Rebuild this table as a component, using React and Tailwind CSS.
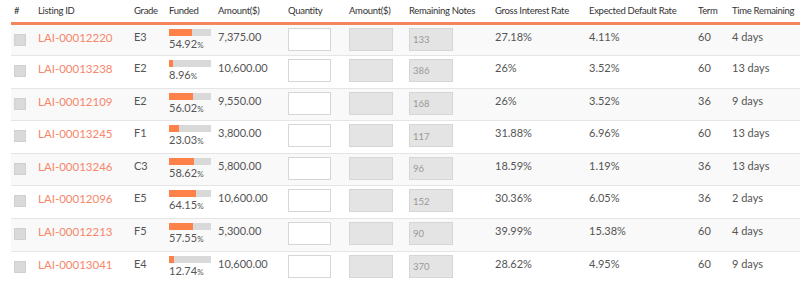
const rows = [
  { id: 'LAI-00012220', grade: 'E3', funded: 54.92, amount: '7,375.00', notes: 133, gross: '27.18%', def: '4.11%', term: 60, time: '4 days' },
  { id: 'LAI-00013238', grade: 'E2', funded: 8.96, amount: '10,600.00', notes: 386, gross: '26%', def: '3.52%', term: 60, time: '13 days' },
  { id: 'LAI-00012109', grade: 'E2', funded: 56.02, amount: '9,550.00', notes: 168, gross: '26%', def: '3.52%', term: 36, time: '9 days' },
  { id: 'LAI-00013245', grade: 'F1', funded: 23.03, amount: '3,800.00', notes: 117, gross: '31.88%', def: '6.96%', term: 60, time: '13 days' },
  { id: 'LAI-00013246', grade: 'C3', funded: 58.62, amount: '5,800.00', notes: 96, gross: '18.59%', def: '1.19%', term: 36, time: '13 days' },
  { id: 'LAI-00012096', grade: 'E5', funded: 64.15, amount: '10,600.00', notes: 152, gross: '30.36%', def: '6.05%', term: 36, time: '2 days' },
  { id: 'LAI-00012213', grade: 'F5', funded: 57.55, amount: '5,300.00', notes: 90, gross: '39.99%', def: '15.38%', term: 60, time: '4 days' },
  { id: 'LAI-00013041', grade: 'E4', funded: 12.74, amount: '10,600.00', notes: 370, gross: '28.62%', def: '4.95%', term: 60, time: '9 days' },
];

const headers = [
  ['#', 'w-[24px]'],
  ['Listing ID', 'w-[96px]'],
  ['Grade', 'w-[35px]'],
  ['Funded', 'w-[49px]'],
  ['Amount($)', 'w-[70px]'],
  ['Quantity', 'w-[61px]'],
  ['Amount($)', 'w-[60px]'],
  ['Remaining Notes', 'w-[86px]'],
  ['Gross Interest Rate', 'w-[94px]'],
  ['Expected Default Rate', 'w-[109px]'],
  ['Term', 'w-[34px]'],
  ['Time Remaining', 'w-[71px]'],
];

function FundedBar({ value }) {
  return (
    <div className="flex flex-col">
      <div className="h-[7px] w-[42px] bg-[#d9d9d9] mt-[4px]">
        <div className="h-full bg-[#fd8149]" style={{ width: `${value}%` }} />
      </div>
      <span className="text-[11px] leading-[13px] mt-[1px]">
        {value}<span className="text-[8px]">%</span>
      </span>
    </div>
  );
}

export default function App() {
  return (
    <div className="w-[800px] h-[283px] overflow-hidden bg-white pl-[11px] text-[#555]" style={{ fontFamily: 'Lato, "Open Sans", sans-serif' }}>
      <table className="table-fixed border-collapse w-[789px]">
        <thead>
          <tr className="border-b-[3px] border-[#f5855a]">
            {headers.map(([label, w], i) => (
              <th key={i} className={`${w} h-[23px] pl-[3px] pt-[1px] text-left font-normal text-[9.5px] tracking-[-0.3px] text-[#333] align-middle whitespace-nowrap`}>
                {label}
              </th>
            ))}
          </tr>
        </thead>
        <tbody>
          {rows.map((r, i) => (
            <tr key={r.id} className={`h-[32.6px] border-b border-[#e5e5e5] ${i % 2 === 0 ? 'bg-[#f9f9f9]' : 'bg-white'}`}>
              <td className="pl-[3px] align-top pt-[9px]">
                <div className="w-[12px] h-[12px] bg-[#dadada] border border-[#d0d0d0]" />
              </td>
              <td className="pl-[3px] align-top pt-[4px] text-[11.5px] text-[#f6876b] whitespace-nowrap">{r.id}</td>
              <td className="pl-[3px] align-top pt-[4px] text-[11px]">{r.grade}</td>
              <td className="pl-[3px] align-top">
                <FundedBar value={r.funded} />
              </td>
              <td className="pl-[3px] align-top pt-[4px] text-[11px] whitespace-nowrap">{r.amount}</td>
              <td className="pl-[3px] align-top pt-[3px]">
                <div className="w-[43px] h-[23px] bg-white border border-[#d6d6d6]" />
              </td>
              <td className="pl-[3px] align-top pt-[3px]">
                <div className="w-[44px] h-[23px] bg-[#e4e4e4] border border-[#d6d6d6]" />
              </td>
              <td className="pl-[3px] align-top pt-[3px]">
                <div className="w-[44px] h-[23px] bg-[#e4e4e4] border border-[#d6d6d6] text-[9.5px] text-[#999] pl-[3px] flex items-center pt-[2px]">
                  {r.notes}
                </div>
              </td>
              <td className="pl-[3px] align-top pt-[4px] text-[11px]">{r.gross}</td>
              <td className="pl-[3px] align-top pt-[4px] text-[11px]">{r.def}</td>
              <td className="pl-[3px] align-top pt-[4px] text-[11px]">{r.term}</td>
              <td className="pl-[3px] align-top pt-[4px] text-[11px] whitespace-nowrap">{r.time}</td>
            </tr>
          ))}
        </tbody>
      </table>
    </div>
  );
}
